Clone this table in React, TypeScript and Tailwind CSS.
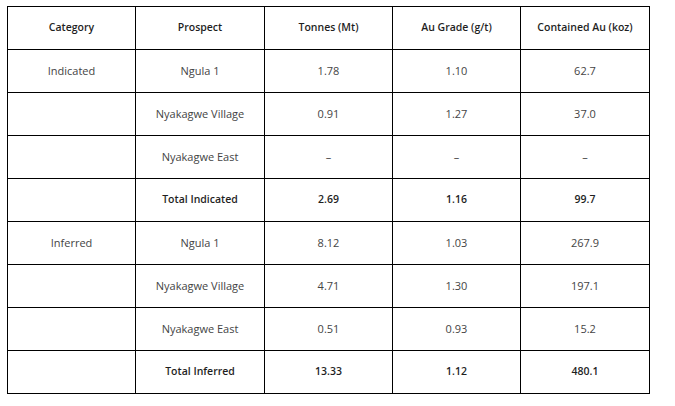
const headers = [
  "Category",
  "Prospect",
  "Tonnes (Mt)",
  "Au Grade (g/t)",
  "Contained Au (koz)",
];

type Row = { cells: string[]; total?: boolean };

const rows: Row[] = [
  { cells: ["Indicated", "Ngula 1", "1.78", "1.10", "62.7"] },
  { cells: ["", "Nyakagwe Village", "0.91", "1.27", "37.0"] },
  { cells: ["", "Nyakagwe East", "–", "–", "–"] },
  { cells: ["", "Total Indicated", "2.69", "1.16", "99.7"], total: true },
  { cells: ["Inferred", "Ngula 1", "8.12", "1.03", "267.9"] },
  { cells: ["", "Nyakagwe Village", "4.71", "1.30", "197.1"] },
  { cells: ["", "Nyakagwe East", "0.51", "0.93", "15.2"] },
  { cells: ["", "Total Inferred", "13.33", "1.12", "480.1"], total: true },
];

const widths = ["w-[128px]", "w-[129px]", "w-[128px]", "w-[128px]", "w-[129px]"];

const boldCell =
  "border border-black text-center text-[10.5px] font-semibold text-[#1f1f1f] p-0";
const plainCell =
  "border border-black text-center text-[11px] text-[#444444] p-0";

const App = () => {
  return (
    <div className="w-[675px] h-[406px] bg-white pl-[7px] pt-[6px] font-['Open_Sans',sans-serif]">
      <table className="table-fixed border-collapse w-[643px]">
        <colgroup>
          {widths.map((w, i) => (
            <col key={i} className={w} />
          ))}
        </colgroup>
        <thead>
          <tr className="h-[43px]">
            {headers.map((h) => (
              <th key={h} className={boldCell}>
                {h}
              </th>
            ))}
          </tr>
        </thead>
        <tbody>
          {rows.map((row, i) => (
            <tr key={i} className="h-[43px]">
              {row.cells.map((c, j) => (
                <td key={j} className={row.total && j > 0 ? boldCell : plainCell}>
                  {c}
                </td>
              ))}
            </tr>
          ))}
        </tbody>
      </table>
    </div>
  );
};

export default App;
